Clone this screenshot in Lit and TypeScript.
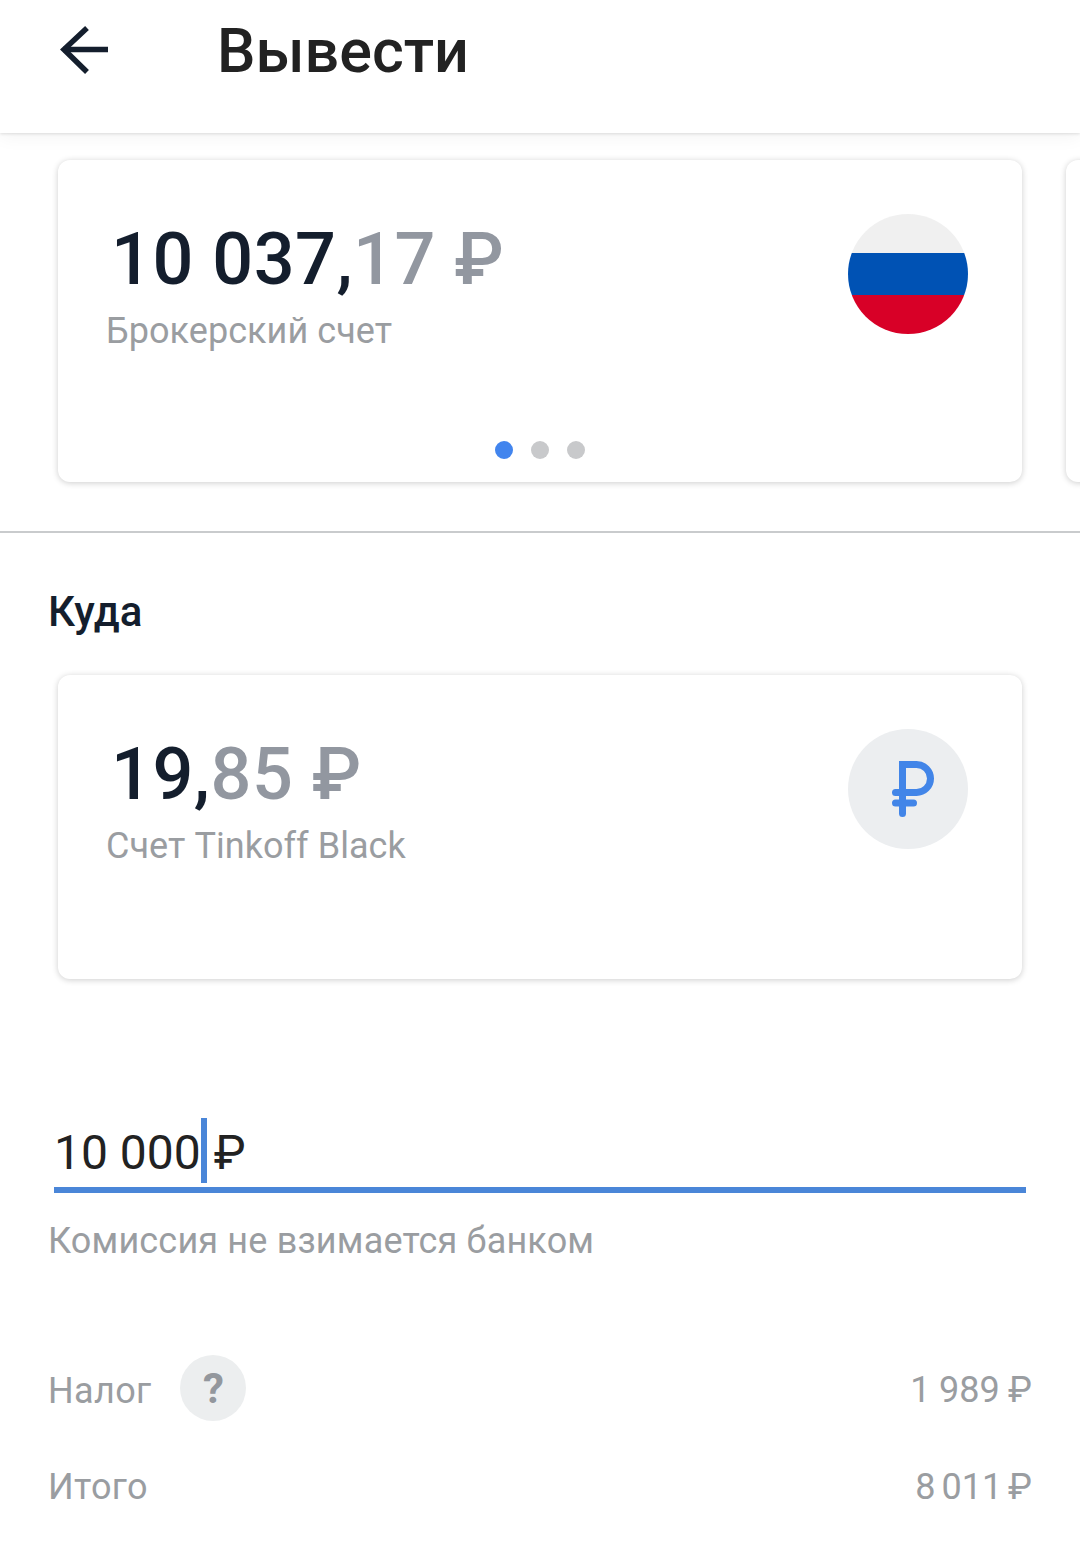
import { LitElement, css, html } from 'lit';
import { customElement } from 'lit/decorators.js';

@customElement('app-root')
export class AppRoot extends LitElement {
  static styles = css`
    :host {
      display: block;
      width: 1080px;
      height: 1554px;
      overflow: hidden;
      background: #fff;
      font-family: Roboto, 'Liberation Sans', sans-serif;
      color: #141e2d;
    }

    .header {
      position: relative;
      height: 133px;
      box-sizing: border-box;
      display: flex;
      align-items: flex-start;
      background: #fff;
      box-shadow: 0 1px 3px rgba(0, 0, 0, 0.12), 0 6px 16px rgba(0, 0, 0, 0.04);
    }
    .back {
      display: block;
      margin: 20px 0 0 54px;
      width: 60px;
      height: 60px;
      flex: none;
    }
    .title {
      margin: 14px 0 0 103px;
      font-size: 61px;
      line-height: 74px;
      font-weight: 500;
      color: #222;
    }

    .carousel {
      height: 400px;
      box-sizing: border-box;
      padding: 27px 0 0 58px;
      display: flex;
      gap: 44px;
      overflow: hidden;
      border-bottom: 2px solid #c9cbcd;
    }

    .card {
      flex: none;
      width: 964px;
      box-sizing: border-box;
      border-radius: 12px;
      background: #fff;
      box-shadow: 0 1px 6px rgba(0, 0, 0, 0.2);
      display: flex;
      flex-direction: column;
      padding: 54px 54px 0 48px;
    }
    .card.from {
      height: 322px;
    }
    .card.to {
      height: 304px;
      margin: 0 0 0 58px;
    }
    .card-top {
      display: flex;
      justify-content: space-between;
      align-items: flex-start;
    }
    .amount {
      margin: 2px 0 0 5px;
      font-size: 72px;
      line-height: 88px;
      font-weight: 500;
      letter-spacing: 0.5px;
      color: #141e2d;
      white-space: pre;
    }
    .amount .dim {
      color: #9297a0;
    }
    .account {
      font-size: 36px;
      line-height: 42px;
      letter-spacing: 0.05px;
      color: #9a9da1;
      margin-top: 6px;
    }
    .flag {
      width: 120px;
      height: 120px;
      border-radius: 50%;
      background: linear-gradient(
        #f0f0f0 0 39px,
        #0052b4 39px 81px,
        #d80027 81px 120px
      );
    }
    .ruble-badge {
      display: block;
      width: 120px;
      height: 120px;
    }

    .dots {
      display: flex;
      justify-content: center;
      gap: 18px;
      margin: 89px 0 0 6px;
    }
    .dot {
      width: 18px;
      height: 18px;
      border-radius: 50%;
      background: #c8c9cb;
    }
    .dot.active {
      background: #4285ee;
    }

    .section-title {
      margin: 55px 0 40px 48px;
      font-size: 42px;
      line-height: 47px;
      font-weight: 500;
      color: #141e2d;
    }

    .field {
      margin: 139px 54px 0 54px;
      height: 75px;
      box-sizing: border-box;
      border-bottom: 6px solid #4a86d8;
      display: flex;
      align-items: flex-start;
      font-size: 48px;
      line-height: 70px;
      color: #222;
    }
    .caret {
      flex: none;
      width: 6px;
      height: 65px;
      margin: 0 7px 0 0;
      background: #4a86d8;
    }
    .note {
      margin: 27px 0 0 48px;
      font-size: 36px;
      line-height: 42px;
      color: #9a9da1;
      letter-spacing: 0.17px;
    }

    .row {
      display: flex;
      align-items: center;
      justify-content: space-between;
      margin: 0 48px 0 48px;
      font-size: 36px;
      color: #9a9da1;
    }
    .row.tax {
      margin-top: 93px;
      height: 66px;
      word-spacing: -0.5px;
    }
    .row.total {
      margin-top: 33px;
      height: 66px;
      word-spacing: -3px;
    }
    .label {
      display: flex;
      align-items: center;
      gap: 29px;
    }
    .label-text {
      letter-spacing: 0.35px;
    }
    .label-text.low {
      padding-top: 5px;
    }
    .value-tax {
      padding-top: 4px;
    }
    .hint {
      width: 66px;
      height: 66px;
      border-radius: 50%;
      background: #eceeef;
      display: flex;
      align-items: center;
      justify-content: center;
      font-size: 42px;
      font-weight: 700;
      color: #93979d;
    }
  `;

  render() {
    return html`
      <div class="header">
        <svg class="back" viewBox="0 0 60 60" fill="none" stroke="#141e2d" stroke-width="5.5">
          <path d="M54 29.5H9" />
          <path d="M33 8L10 29.5L33 52" />
        </svg>
        <div class="title">Вывести</div>
      </div>

      <div class="carousel">
        <div class="card from">
          <div class="card-top">
            <div>
              <div class="amount">10 037,<span class="dim">17 ₽</span></div>
              <div class="account">Брокерский счет</div>
            </div>
            <div class="flag"></div>
          </div>
          <div class="dots">
            <div class="dot active"></div>
            <div class="dot"></div>
            <div class="dot"></div>
          </div>
        </div>
        <div class="card from"></div>
      </div>

      <div class="section-title">Куда</div>

      <div class="card to">
        <div class="card-top">
          <div>
            <div class="amount">19,<span class="dim">85 ₽</span></div>
            <div class="account">Счет Tinkoff Black</div>
          </div>
          <svg class="ruble-badge" viewBox="0 0 120 120" fill="none">
            <circle cx="60" cy="60" r="60" fill="#eceef0" />
            <path
              d="M54.5 84.5V35.5H68.5a14 14 0 0 1 0 28H47.5M47.5 74H65.5"
              stroke="#4285e8"
              stroke-width="7"
              stroke-linecap="round"
            />
          </svg>
        </div>
      </div>

      <div class="field">
        <span>10 000</span>
        <div class="caret"></div>
        <span>₽</span>
      </div>
      <div class="note">Комиссия не взимается банком</div>

      <div class="row tax">
        <div class="label"><span class="label-text low">Налог</span><div class="hint">?</div></div>
        <div class="value-tax">1 989 ₽</div>
      </div>
      <div class="row total">
        <div class="label-text">Итого</div>
        <div>8 011 ₽</div>
      </div>
    `;
  }
}
